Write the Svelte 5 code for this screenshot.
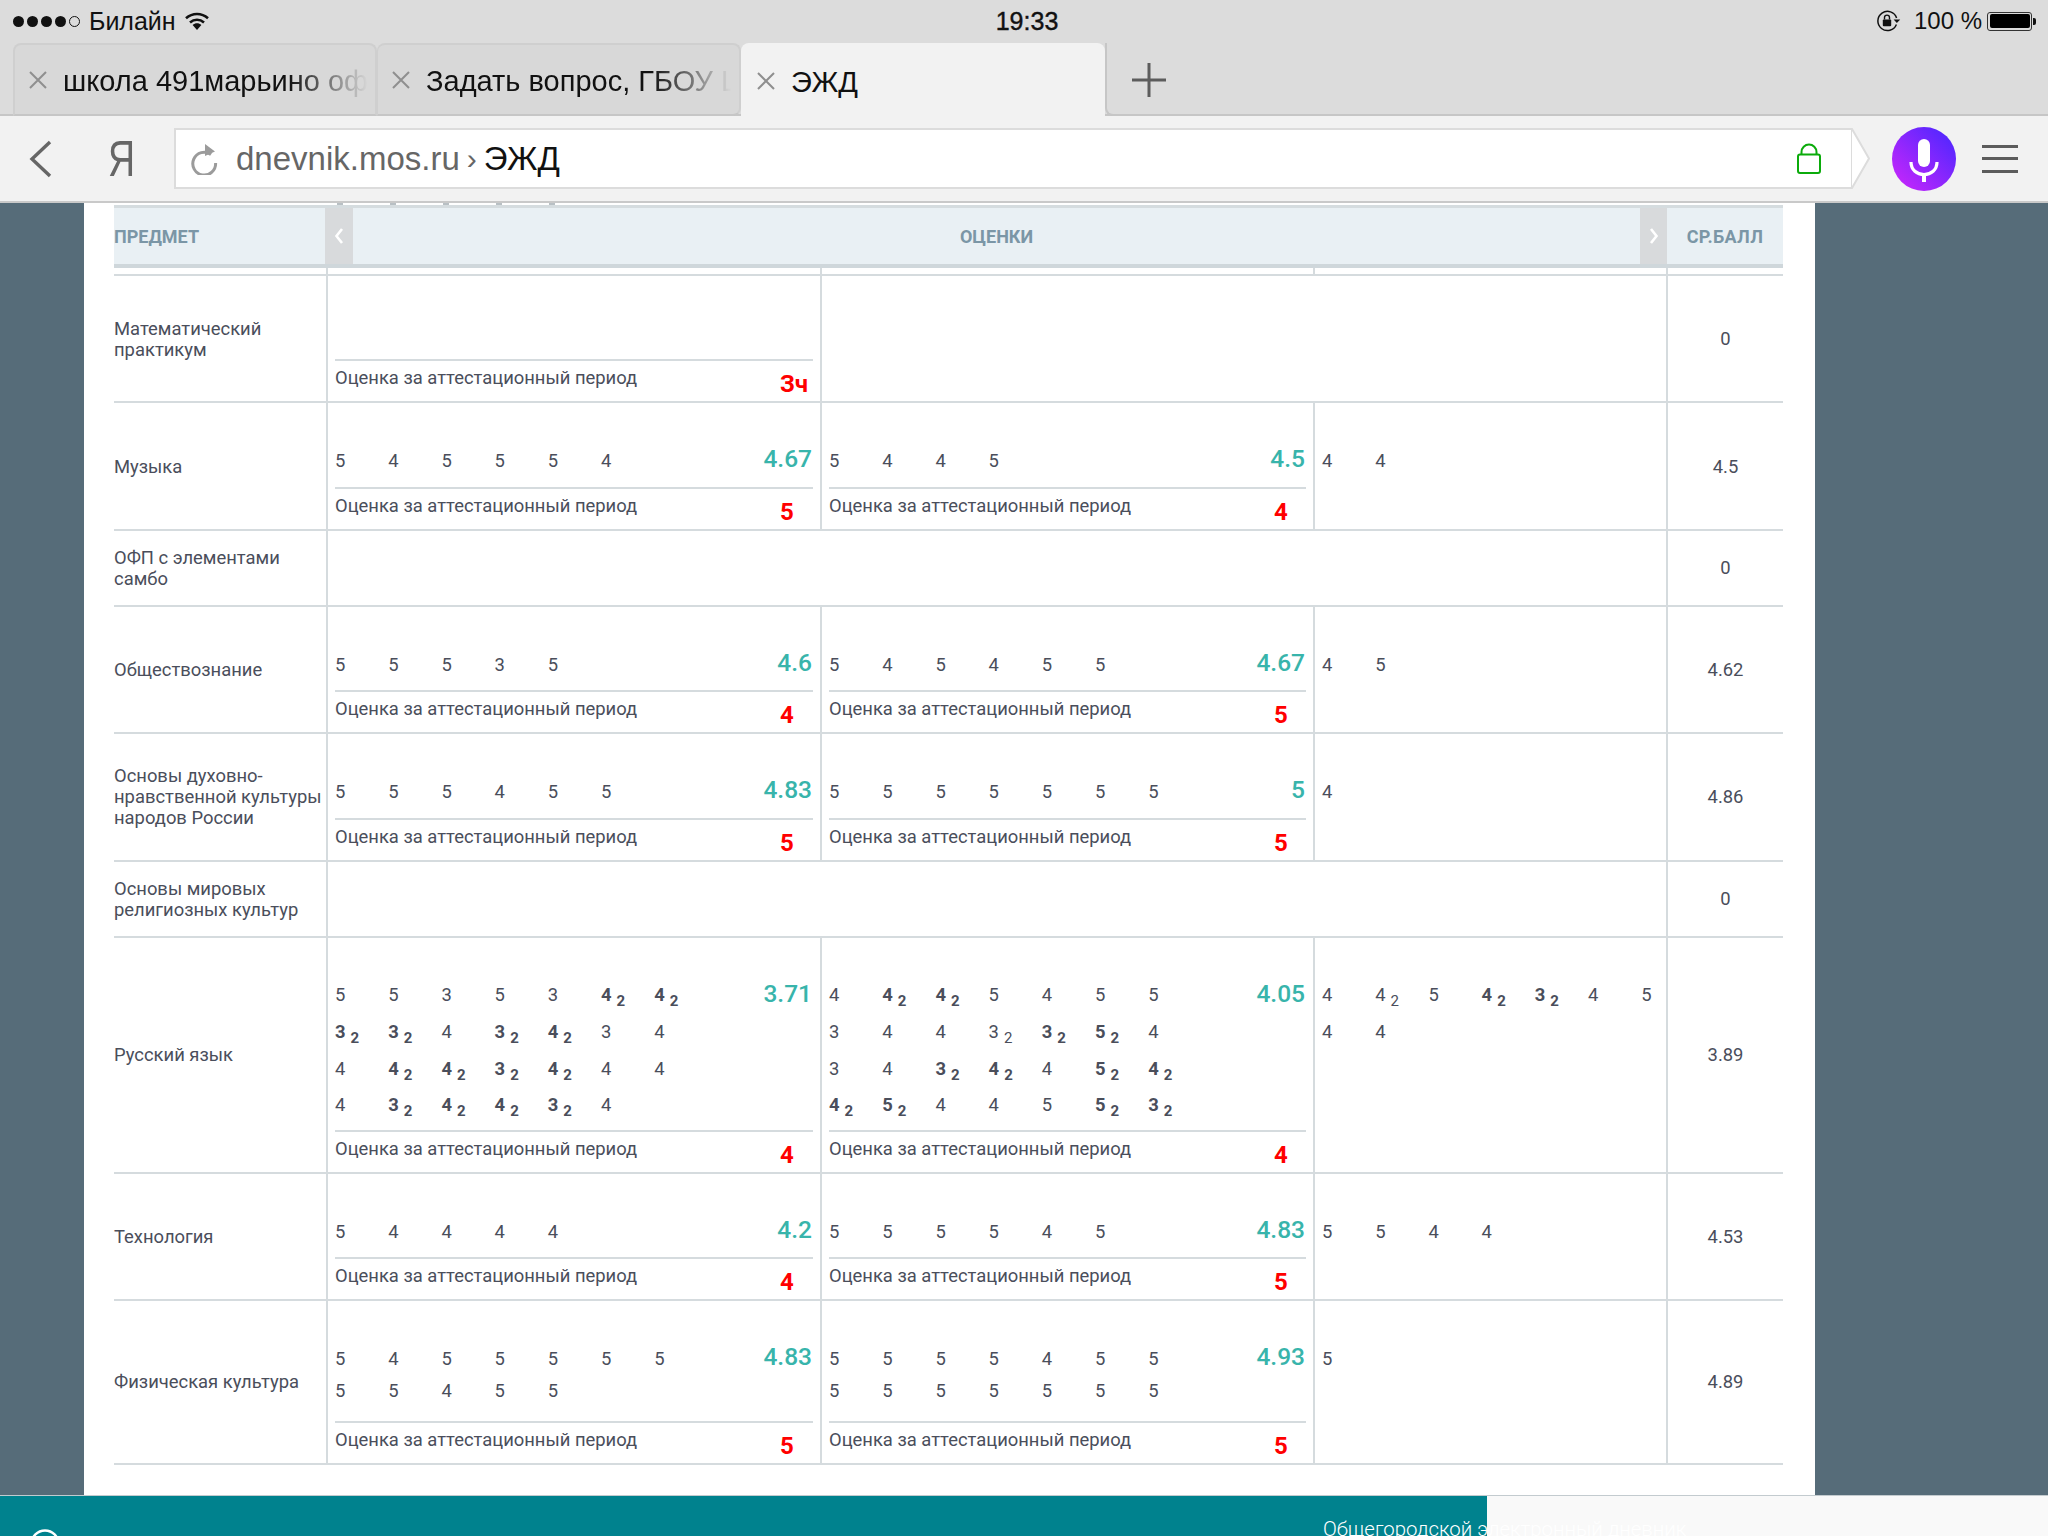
<script>
  const parse = (s) => s.split(' ').map((t) => ({ v: t[0], kind: t[1] === '*' ? 'bold' : t[1] === '~' ? 'plain' : '' }));
  const cell = (lines, avg = '', final = '') => ({ lines: lines.map(parse), avg, final });

  const rows = [
    { name: ['Математический', 'практикум'], type: 'std', wide: true, cells: [cell([], '', 'Зч'), cell([])], avg: '0' },
    { name: ['Музыка'], type: 'std', cells: [cell(['5 4 5 5 5 4'], '4.67', '5'), cell(['5 4 4 5'], '4.5', '4'), cell(['4 4'])], avg: '4.5' },
    { name: ['ОФП с элементами', 'самбо'], type: 'empty', avg: '0' },
    { name: ['Обществознание'], type: 'std', cells: [cell(['5 5 5 3 5'], '4.6', '4'), cell(['5 4 5 4 5 5'], '4.67', '5'), cell(['4 5'])], avg: '4.62' },
    { name: ['Основы духовно-', 'нравственной культуры', 'народов России'], type: 'std', cells: [cell(['5 5 5 4 5 5'], '4.83', '5'), cell(['5 5 5 5 5 5 5'], '5', '5'), cell(['4'])], avg: '4.86' },
    { name: ['Основы мировых', 'религиозных культур'], type: 'empty', avg: '0' },
    { name: ['Русский язык'], type: 'four', cells: [
      cell(['5 5 3 5 3 4* 4*', '3* 3* 4 3* 4* 3 4', '4 4* 4* 3* 4* 4 4', '4 3* 4* 4* 3* 4'], '3.71', '4'),
      cell(['4 4* 4* 5 4 5 5', '3 4 4 3~ 3* 5* 4', '3 4 3* 4* 4 5* 4*', '4* 5* 4 4 5 5* 3*'], '4.05', '4'),
      cell(['4 4~ 5 4* 3* 4 5', '4 4'])], avg: '3.89' },
    { name: ['Технология'], type: 'std', cells: [cell(['5 4 4 4 4'], '4.2', '4'), cell(['5 5 5 5 4 5'], '4.83', '5'), cell(['5 5 4 4'])], avg: '4.53' },
    { name: ['Физическая культура'], type: 'two', cells: [
      cell(['5 4 5 5 5 5 5', '5 5 4 5 5'], '4.83', '5'),
      cell(['5 5 5 5 4 5 5', '5 5 5 5 5 5 5'], '4.93', '5'),
      cell(['5'])], avg: '4.89' }
  ];
</script>

<div class="screen">
  <div class="status">
    <div class="st-left">
      <span class="dots"><i></i><i></i><i></i><i></i><i class="off"></i></span>
      <span class="carrier">Билайн</span>
      <svg class="wifi" width="24" height="18" viewBox="0 0 24 18">
        <path d="M1 6.2C7.4.6 16.6.6 23 6.2" fill="none" stroke="#111" stroke-width="2.6"/>
        <path d="M5 10.4c4.2-3.6 9.8-3.6 14 0" fill="none" stroke="#111" stroke-width="2.6"/>
        <path d="M7.6 13c2.6-2.2 6.2-2.2 8.8 0L12 18z" fill="#111"/>
      </svg>
    </div>
    <div class="time">19:33</div>
    <div class="st-right">
      <svg class="rot" width="24" height="22" viewBox="0 0 24 22">
        <path d="M19.4 14.5A9.6 9.6 0 1 1 19.6 8" fill="none" stroke="#111" stroke-width="1.5"/>
        <path d="M16.6 9.5h6.6l-3.3 3.6z" fill="#111"/>
        <rect x="5.8" y="9.5" width="8.4" height="6.8" rx="1" fill="#111"/>
        <path d="M7.5 9.5V7.6a2.5 2.5 0 0 1 5 0v1.9" fill="none" stroke="#111" stroke-width="1.4"/>
      </svg>
      <span class="pct">100 %</span>
      <span class="battery"><b></b></span>
      <span class="nub"></span>
    </div>
  </div>

  <div class="tabs">
    <div class="tab first">
      <svg class="x" width="18" height="18" viewBox="0 0 18 18"><path d="M1 1l16 16M17 1L1 17" stroke="#8f8f8f" stroke-width="2"/></svg>
      <span class="tab-text">школа 491марьино официальный</span>
    </div>
    <div class="tab second">
      <svg class="x" width="18" height="18" viewBox="0 0 18 18"><path d="M1 1l16 16M17 1L1 17" stroke="#8f8f8f" stroke-width="2"/></svg>
      <span class="tab-text">Задать вопрос, ГБОУ Школа</span>
    </div>
    <div class="tab active">
      <svg class="x" width="18" height="18" viewBox="0 0 18 18"><path d="M1 1l16 16M17 1L1 17" stroke="#8f8f8f" stroke-width="2"/></svg>
      <span class="tab-label">ЭЖД</span>
    </div>
    <div class="tab-rest">
      <svg width="34" height="34" viewBox="0 0 34 34"><path d="M17 0v34M0 17h34" stroke="#5c5c5c" stroke-width="3"/></svg>
    </div>
  </div>

  <div class="toolbar">
    <svg class="back" width="24" height="38" viewBox="0 0 24 38"><path d="M21 2L3 19l18 17" fill="none" stroke="#666" stroke-width="3.4"/></svg>
    <span class="ya">Я</span>
    <div class="address">
      <svg class="reload" width="28" height="32" viewBox="0 0 28 32">
        <path d="M21 11.5A11.4 11.4 0 1 0 25.6 20" fill="none" stroke="#9b9b9b" stroke-width="3"/>
        <path d="M15 1l10 7.5-10 4.5z" fill="#9b9b9b"/>
      </svg>
      <span class="host">dnevnik.mos.ru</span>
      <span class="sep">›</span>
      <span class="page-name">ЭЖД</span>
      <svg class="lock" width="24" height="31" viewBox="0 0 24 31">
        <rect x="1" y="11.5" width="22" height="18.5" rx="2" fill="none" stroke="#0bab0b" stroke-width="2"/>
        <path d="M4.5 11.5V9a7.5 7.5 0 0 1 15 0v2.5" fill="none" stroke="#0bab0b" stroke-width="2"/>
      </svg>
    </div>
    <svg class="tip" width="19" height="61" viewBox="0 0 19 61">
      <path d="M0 1h1l17 29.500L1 60H0z" fill="#fff" stroke="#dcdcdc" stroke-width="2"/>
    </svg>
    <svg class="mic" width="64" height="64" viewBox="0 0 64 64">
      <defs>
        <linearGradient id="micg" x1="0" y1="1" x2="1" y2="0">
          <stop offset="0" stop-color="#d026fb"/><stop offset="1" stop-color="#4427ff"/>
        </linearGradient>
      </defs>
      <circle cx="32" cy="32" r="32" fill="url(#micg)"/>
      <rect x="26" y="12" width="12" height="28" rx="6" fill="#fff"/>
      <path d="M19 35c0 8 6 12.500 13 12.500S45 43 45 35" fill="none" stroke="#fff" stroke-width="3.200"/>
      <path d="M32 47v8" stroke="#fff" stroke-width="4"/>
    </svg>
    <div class="menu"><i></i><i></i><i></i></div>
  </div>

  <div class="main">
    <div class="panel">
      <div class="ticks"><i></i><i></i><i></i><i></i><i></i></div>
      <div class="head">
        <div class="h-subject">ПРЕДМЕТ</div>
        <div class="h-arrow"><svg width="10" height="18" viewBox="0 0 10 18"><path d="M8 2L2.500 9 8 16" fill="none" stroke="#fff" stroke-width="2.600"/></svg></div>
        <div class="h-grades">ОЦЕНКИ</div>
        <div class="h-arrow"><svg width="10" height="18" viewBox="0 0 10 18"><path d="M2 2l5.500 7L2 16" fill="none" stroke="#fff" stroke-width="2.600"/></svg></div>
        <div class="h-avg">СР.БАЛЛ</div>
      </div>
      <div class="grid spacer"><div></div><div class="c"></div><div class="c"></div><div class="c"></div><div class="c"></div></div>

      {#each rows as row}
        <div class="grid row {row.type}">
          <div class="subject">{#each row.name as part}<div>{part}</div>{/each}</div>
          {#if row.type === 'empty'}
            <div class="c span3"></div>
          {:else}
            {#each row.cells as c, i}
              <div class="c" class:span2={row.wide && i === 1}>
                <div class="block">
                  <div class="lines">
                    {#each c.lines as line}
                      <div class="line">
                        {#each line as g}
                          <span class="g" class:bold={g.kind === 'bold'}>{g.v}{#if g.kind}<sub>2</sub>{/if}</span>
                        {/each}
                      </div>
                    {/each}
                  </div>
                  {#if c.avg}<div class="avg">{c.avg}</div>{/if}
                </div>
                {#if c.final}
                  <div class="foot">
                    <span class="label">Оценка за аттестационный период</span>
                    <span class="final">{c.final}</span>
                  </div>
                {/if}
              </div>
            {/each}
          {/if}
          <div class="c avgcol">{row.avg}</div>
        </div>
      {/each}
    </div>
  </div>

  <div class="footer">
    <div class="teal">
      <svg class="ficon" width="30" height="30" viewBox="0 0 30 30"><circle cx="15" cy="15" r="13.500" fill="none" stroke="#fff" stroke-width="2.500"/></svg>
      <span class="ftext">Общегородской электронный дневник</span>
    </div>
    <div class="fill"></div>
  </div>
</div>

<style>
  :global(body) { margin: 0; }
  .screen {
    width: 2048px; height: 1536px; overflow: hidden;
    display: flex; flex-direction: column;
    font-family: Roboto, "Noto Sans", sans-serif;
    background: #566c79;
  }

  /* status bar */
  .status {
    height: 42px; flex: none; background: #dcdcdc;
    display: grid; grid-template-columns: 1fr auto 1fr; align-items: center; padding-left: 6px; box-sizing: border-box;
    font-family: "Liberation Sans", Arial, sans-serif; color: #111;
  }
  .st-left { display: flex; align-items: center; padding-left: 7px; }
  .dots { display: flex; gap: 3px; }
  .dots i { width: 11px; height: 11px; border-radius: 50%; background: #111; box-sizing: border-box; }
  .dots i.off { background: none; border: 1px solid #111; }
  .carrier { font-size: 25px; margin-left: 9px; }
  .wifi { margin-left: 9px; }
  .time { font-size: 25px; font-weight: 400; -webkit-text-stroke: 0.4px #111; }
  .st-right { display: flex; align-items: center; justify-content: flex-end; padding-right: 12px; }
  .pct { font-size: 24px; margin-left: 13px; }
  .battery { width: 45px; height: 19px; margin-left: 5px; border: 1px solid #333; border-radius: 3px; padding: 1.500px; box-sizing: border-box; display: flex; }
  .battery b { flex: 1; background: #000; border-radius: 2px; }
  .nub { width: 3px; height: 7px; margin-left: 1px; background: #111; border-radius: 0 2px 2px 0; }

  /* tabs */
  .tabs { height: 74px; flex: none; display: flex; padding-left: 13px; background: #dcdcdc; box-shadow: inset 0 -2px 0 #c6c6c6; }
  .tab { width: 364px; box-sizing: border-box; margin-top: 1px; display: flex; align-items: center; padding-left: 14px; padding-top: 3px; border-radius: 8px 8px 0 0; background: #d8d8d8; border: 2px solid #cfcfcf; border-bottom: 2px solid #c6c6c6; }
  .tab.second { border-bottom-right-radius: 8px; border-left-width: 1px; }
  .tab.active { background: #f2f2f2; border: none; height: 73px; padding-left: 16px; padding-top: 5px; }
  .tab .x { flex: none; margin-top: -2px; }
  .tab-text, .tab-label { font-family: "Liberation Sans", Arial, sans-serif; font-size: 29px; color: #111; margin-left: 16px; white-space: nowrap; overflow: hidden; }
  .tab-text { width: 305px; -webkit-mask-image: linear-gradient(to right, #000 74%, transparent 100%); mask-image: linear-gradient(to right, #000 74%, transparent 100%); }
  .tab-rest { flex: 1; border-bottom-left-radius: 8px; display: flex; align-items: center; padding-left: 25px; padding-bottom: 0; border-left: 2px solid #c6c6c6; border-bottom: 2px solid #c6c6c6; margin-top: 1px; }
  .tab-rest svg { margin-top: 2px; }

  /* toolbar */
  .toolbar { height: 87px; flex: none; box-sizing: border-box; background: #f2f2f2; border-bottom: 2px solid #c9c9c9; display: flex; align-items: center; padding-left: 29px; padding-bottom: 0; }
  .back { flex: none; }
  .ya { font-family: "Liberation Sans", Arial, sans-serif; font-size: 50px; line-height: 1; color: #666; width: 18px; margin-left: 55px; transform: scaleX(0.75); transform-origin: left; }
  .address {
    margin-left: 48px; width: 1677px; height: 61px; box-sizing: border-box;
    background: #fff; border: 2px solid #dcdcdc; border-right: none;
    display: flex; align-items: center; padding-left: 14px;
  }
  .host { font-family: "Liberation Sans", Arial, sans-serif; font-size: 33px; color: #666; margin-left: 18px; }
  .sep { font-family: "Liberation Sans", Arial, sans-serif; font-size: 30px; color: #666; margin-left: 7px; }
  .page-name { font-family: "Liberation Sans", Arial, sans-serif; font-size: 33px; color: #111; margin-left: 7px; }
  .lock { margin-left: auto; margin-right: 30px; }
  .tip { flex: none; }
  .mic { flex: none; margin-left: 22px; }
  .menu { display: flex; flex-direction: column; gap: 9.500px; margin-left: 26px; }
  .menu i { width: 36px; height: 3px; background: #5c5c5c; }

  /* main */
  .main { flex: 1; min-height: 0; overflow: hidden; padding-left: 84px; }
  .panel { width: 1731px; height: 100%; background: #fff; box-sizing: border-box; padding-left: 30px; color: #4a4e5b; }
  .ticks { height: 2px; display: flex; padding-left: 223px; }
  .ticks i { width: 6px; height: 2px; background: #b9c0c4; margin-right: 47px; }
  .head {
    width: 1669px; height: 63px; box-sizing: border-box;
    border-top: 3px solid #d5dcdf; border-bottom: 4px solid #cfd7db;
    background: #e9f0f4; display: grid; grid-template-columns: 211px 28px 1287px 27px 116px;
    font-size: 18px; font-weight: 700; color: #7b96a6; align-items: stretch;
  }
  .head > div { display: flex; align-items: center; }
  .h-grades, .h-avg { justify-content: center; }
  .h-avg { letter-spacing: 0.3px; }
  .h-arrow { justify-content: center; background: #d8dadc; }
  .grid { width: 1669px; display: grid; grid-template-columns: 212px 494px 493px 353px 117px; }
  .spacer { height: 6px; }
  .c { border-left: 2px solid #d5dbde; box-sizing: border-box; min-width: 0; }
  .row { border-bottom: 2px solid #d5dbde; box-sizing: border-box; }
  .row.std { height: 127.400px; }
  .row.empty { height: 76px; }
  .row.four { height: 236px; }
  .row.two { height: 164px; }
  .spacer + .row { border-top: 2px solid #d5dbde; height: 129.400px; }
  .span3 { grid-column: span 3; }
  .span2 { grid-column: span 2; }
  .subject { font-size: 18.400px; line-height: 21px; align-self: center; white-space: nowrap; }
  .avgcol { font-size: 18.400px; display: flex; align-items: center; justify-content: center; }

  .block { display: flex; justify-content: space-between; box-sizing: border-box; height: 83.400px; padding: 42px 8px 0 7px; }
  .two .block { height: 120px; }
  .four .block { height: 192px; padding-top: 39.700px; }
  .line { display: flex; height: 32px; line-height: 32px; }
  .four .line { height: 36.700px; line-height: 36.700px; }
  .g { width: 53.200px; font-size: 18.400px; flex: none; white-space: nowrap; }
  .g.bold { font-weight: 700; }
  sub { font-size: 15px; vertical-align: -5px; line-height: 0; margin-left: 5px; }
  .avg { font-size: 24.500px; font-weight: 500; color: #38b4ab; line-height: 28px; flex: none; }
  .four .avg { line-height: 34px; }
  .foot { margin: 0 7px 0 7px; border-top: 2px solid #d5dbde; height: 40px; display: grid; grid-template-columns: 445px auto; box-sizing: content-box; }
  .label { font-size: 18.400px; line-height: 34px; white-space: nowrap; }
  .final { font-size: 24px; font-weight: 700; color: #f00; line-height: 46px; }

  /* footer */
  .footer { height: 41px; flex: none; display: flex; border-top: 1px solid #c3cbcf; box-sizing: border-box; overflow: hidden; }
  .teal { width: 1487px; flex: none; background: #00828e; display: flex; position: relative; }
  .ficon { position: absolute; left: 30px; top: 33px; }
  .ftext { position: absolute; left: 1323px; top: 21px; font-size: 20.400px; font-weight: 300; color: #fff; white-space: nowrap; z-index: 2; }
  .fill { flex: 1; background: #f9f9f9; }
</style>
